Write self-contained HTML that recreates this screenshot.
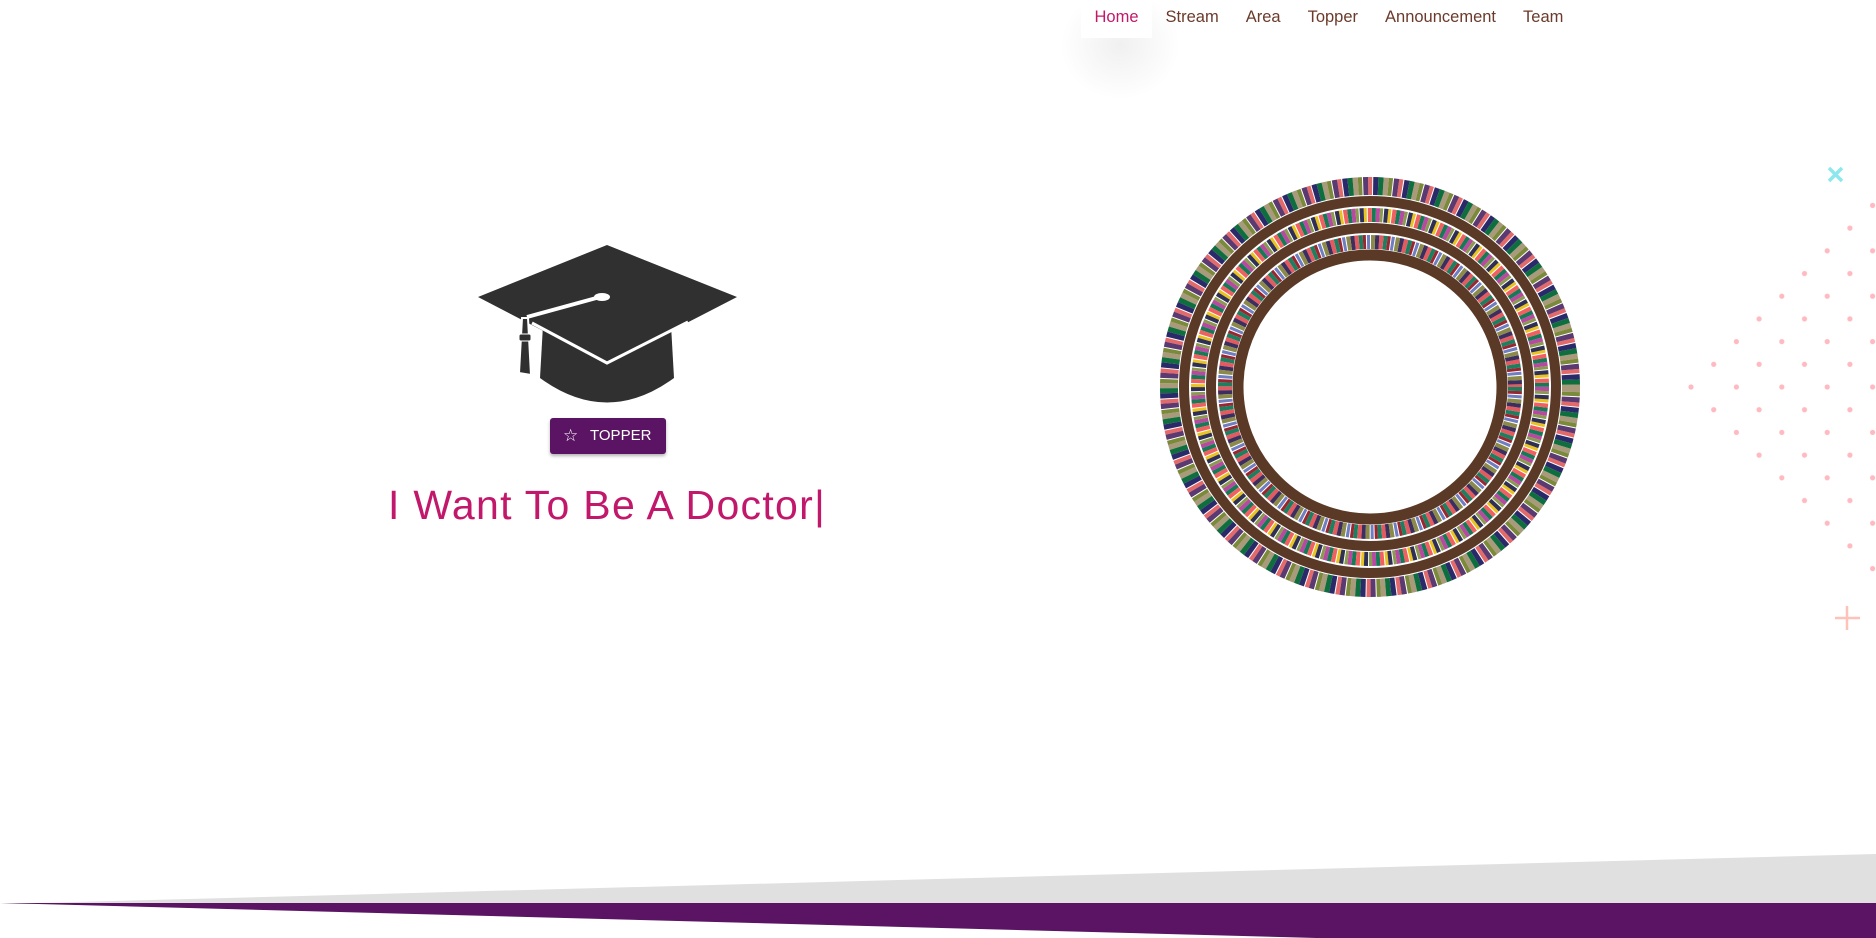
<!DOCTYPE html>
<html><head><meta charset="utf-8"><style>
html,body{margin:0;padding:0;width:1876px;height:938px;overflow:hidden;background:#fff;font-family:"Liberation Sans",sans-serif;position:relative}
.nav{position:absolute;top:0;left:1081px;height:38px;display:flex}
.nav a{display:block;padding:8px 13.5px 0;font-size:16.5px;color:#6b3a2a;text-decoration:none;height:30px}
.nav a.h{color:#c2186b;background:#fff}
.blob{position:absolute;left:1060px;top:-10px;width:120px;height:110px;border-radius:50%;background:radial-gradient(closest-side,rgba(0,0,0,0.06),rgba(0,0,0,0))}
.btn{position:absolute;left:550px;top:418px;width:116px;height:36px;background:#5a1463;border-radius:3px;box-shadow:0 2px 3px rgba(0,0,0,.3);color:#fff;font-size:15px;line-height:36px}
h1{position:absolute;left:388px;top:482px;margin:0;font-weight:normal;font-size:41px;color:#c2186b;white-space:nowrap;letter-spacing:1.3px}
</style></head><body>
<div class="blob"></div>
<div class="nav"><a class="h">Home</a><a>Stream</a><a>Area</a><a>Topper</a><a>Announcement</a><a>Team</a></div>

<svg style="position:absolute;left:0;top:0" width="1876" height="938">
<!-- cap -->
<path d="M543 325 L540 378 Q607 427 674 378 L671 325 Z" fill="#303030"/>
<path d="M478 297 L607 245 L737 297 L607 364 Z" fill="#303030"/>
<path d="M532 323 L607 363 L688 322" fill="none" stroke="#fff" stroke-width="3"/>
<path d="M527 317 L600 297" stroke="#fff" stroke-width="4" fill="none"/>
<ellipse cx="602" cy="297" rx="8" ry="4" fill="#fff"/>
<path d="M522 318 L519 373 L531 375 L528 318 Z" fill="#303030" stroke="#fff" stroke-width="2"/>
<rect x="519" y="334" width="12" height="7" rx="2" fill="#303030" stroke="#fff" stroke-width="1"/>
<!-- book ring -->
<g transform="translate(1370 387)" fill="none">
 <g stroke-width="14">
  <circle r="145" stroke="#1a8060" stroke-dasharray="4 20"/>
  <circle r="145" stroke="#e35a5f" stroke-dasharray="4 20" stroke-dashoffset="4"/>
  <circle r="145" stroke="#3c2e5e" stroke-dasharray="4 20" stroke-dashoffset="8"/>
  <circle r="145" stroke="#8c8a4a" stroke-dasharray="4 20" stroke-dashoffset="12"/>
  <circle r="145" stroke="#6f7ec0" stroke-dasharray="3 21" stroke-dashoffset="16"/>
  <circle r="145" stroke="#9a2630" stroke-dasharray="3 21" stroke-dashoffset="20"/>
 </g>
 <g stroke-width="14">
  <circle r="172" stroke="#b74aa0" stroke-dasharray="4 20"/>
  <circle r="172" stroke="#157a55" stroke-dasharray="4 20" stroke-dashoffset="4"/>
  <circle r="172" stroke="#f06060" stroke-dasharray="4 20" stroke-dashoffset="8"/>
  <circle r="172" stroke="#e9c320" stroke-dasharray="3 21" stroke-dashoffset="12"/>
  <circle r="172" stroke="#2f2f55" stroke-dasharray="4 20" stroke-dashoffset="16"/>
  <circle r="172" stroke="#8a9a50" stroke-dasharray="3 21" stroke-dashoffset="20"/>
 </g>
 <g stroke-width="18">
  <circle r="201" stroke="#a89a7a" stroke-dasharray="5 25"/>
  <circle r="201" stroke="#0f6e3e" stroke-dasharray="5 25" stroke-dashoffset="5"/>
  <circle r="201" stroke="#2a2a6a" stroke-dasharray="5 25" stroke-dashoffset="10"/>
  <circle r="201" stroke="#e36a6a" stroke-dasharray="4 26" stroke-dashoffset="15"/>
  <circle r="201" stroke="#5a3a70" stroke-dasharray="5 25" stroke-dashoffset="20"/>
  <circle r="201" stroke="#7a8a3a" stroke-dasharray="4 26" stroke-dashoffset="25"/>
 </g>
 <circle r="132" stroke="#5a3a26" stroke-width="11"/>
 <circle r="159" stroke="#5a3a26" stroke-width="10"/>
 <circle r="186" stroke="#5a3a26" stroke-width="10"/>
</g>
<!-- dots -->
<defs>
 <pattern id="d" x="1691" y="387" width="45.4" height="45.4" patternUnits="userSpaceOnUse">
  <circle cx="0" cy="0" r="2.6" fill="#ffb9c0"/><circle cx="45.4" cy="0" r="2.6" fill="#ffb9c0"/>
  <circle cx="0" cy="45.4" r="2.6" fill="#ffb9c0"/><circle cx="45.4" cy="45.4" r="2.6" fill="#ffb9c0"/>
  <circle cx="22.7" cy="22.7" r="2.6" fill="#ffb9c0"/>
 </pattern>
</defs>
<polygon points="1686,387 1878,195 1878,579" fill="url(#d)"/>
<path d="M1829 168 L1842 181 M1842 168 L1829 181" stroke="#8de8ee" stroke-width="3.5"/>
<path d="M1835 618 L1860 618 M1847 606 L1847 630" stroke="#ffc2b8" stroke-width="2.5"/>
<!-- footer -->
<polygon points="0,904 1876,854 1876,904" fill="#e0e0e0"/>
<polygon points="0,903 1876,903 1876,938 1316,938" fill="#5a1463"/>
</svg>

<div class="btn"><span style="position:absolute;left:13px;top:0;font-size:17px">☆</span><span style="position:absolute;left:40px">TOPPER</span></div>
<h1>I Want To Be A Doctor|</h1>
</body></html>
